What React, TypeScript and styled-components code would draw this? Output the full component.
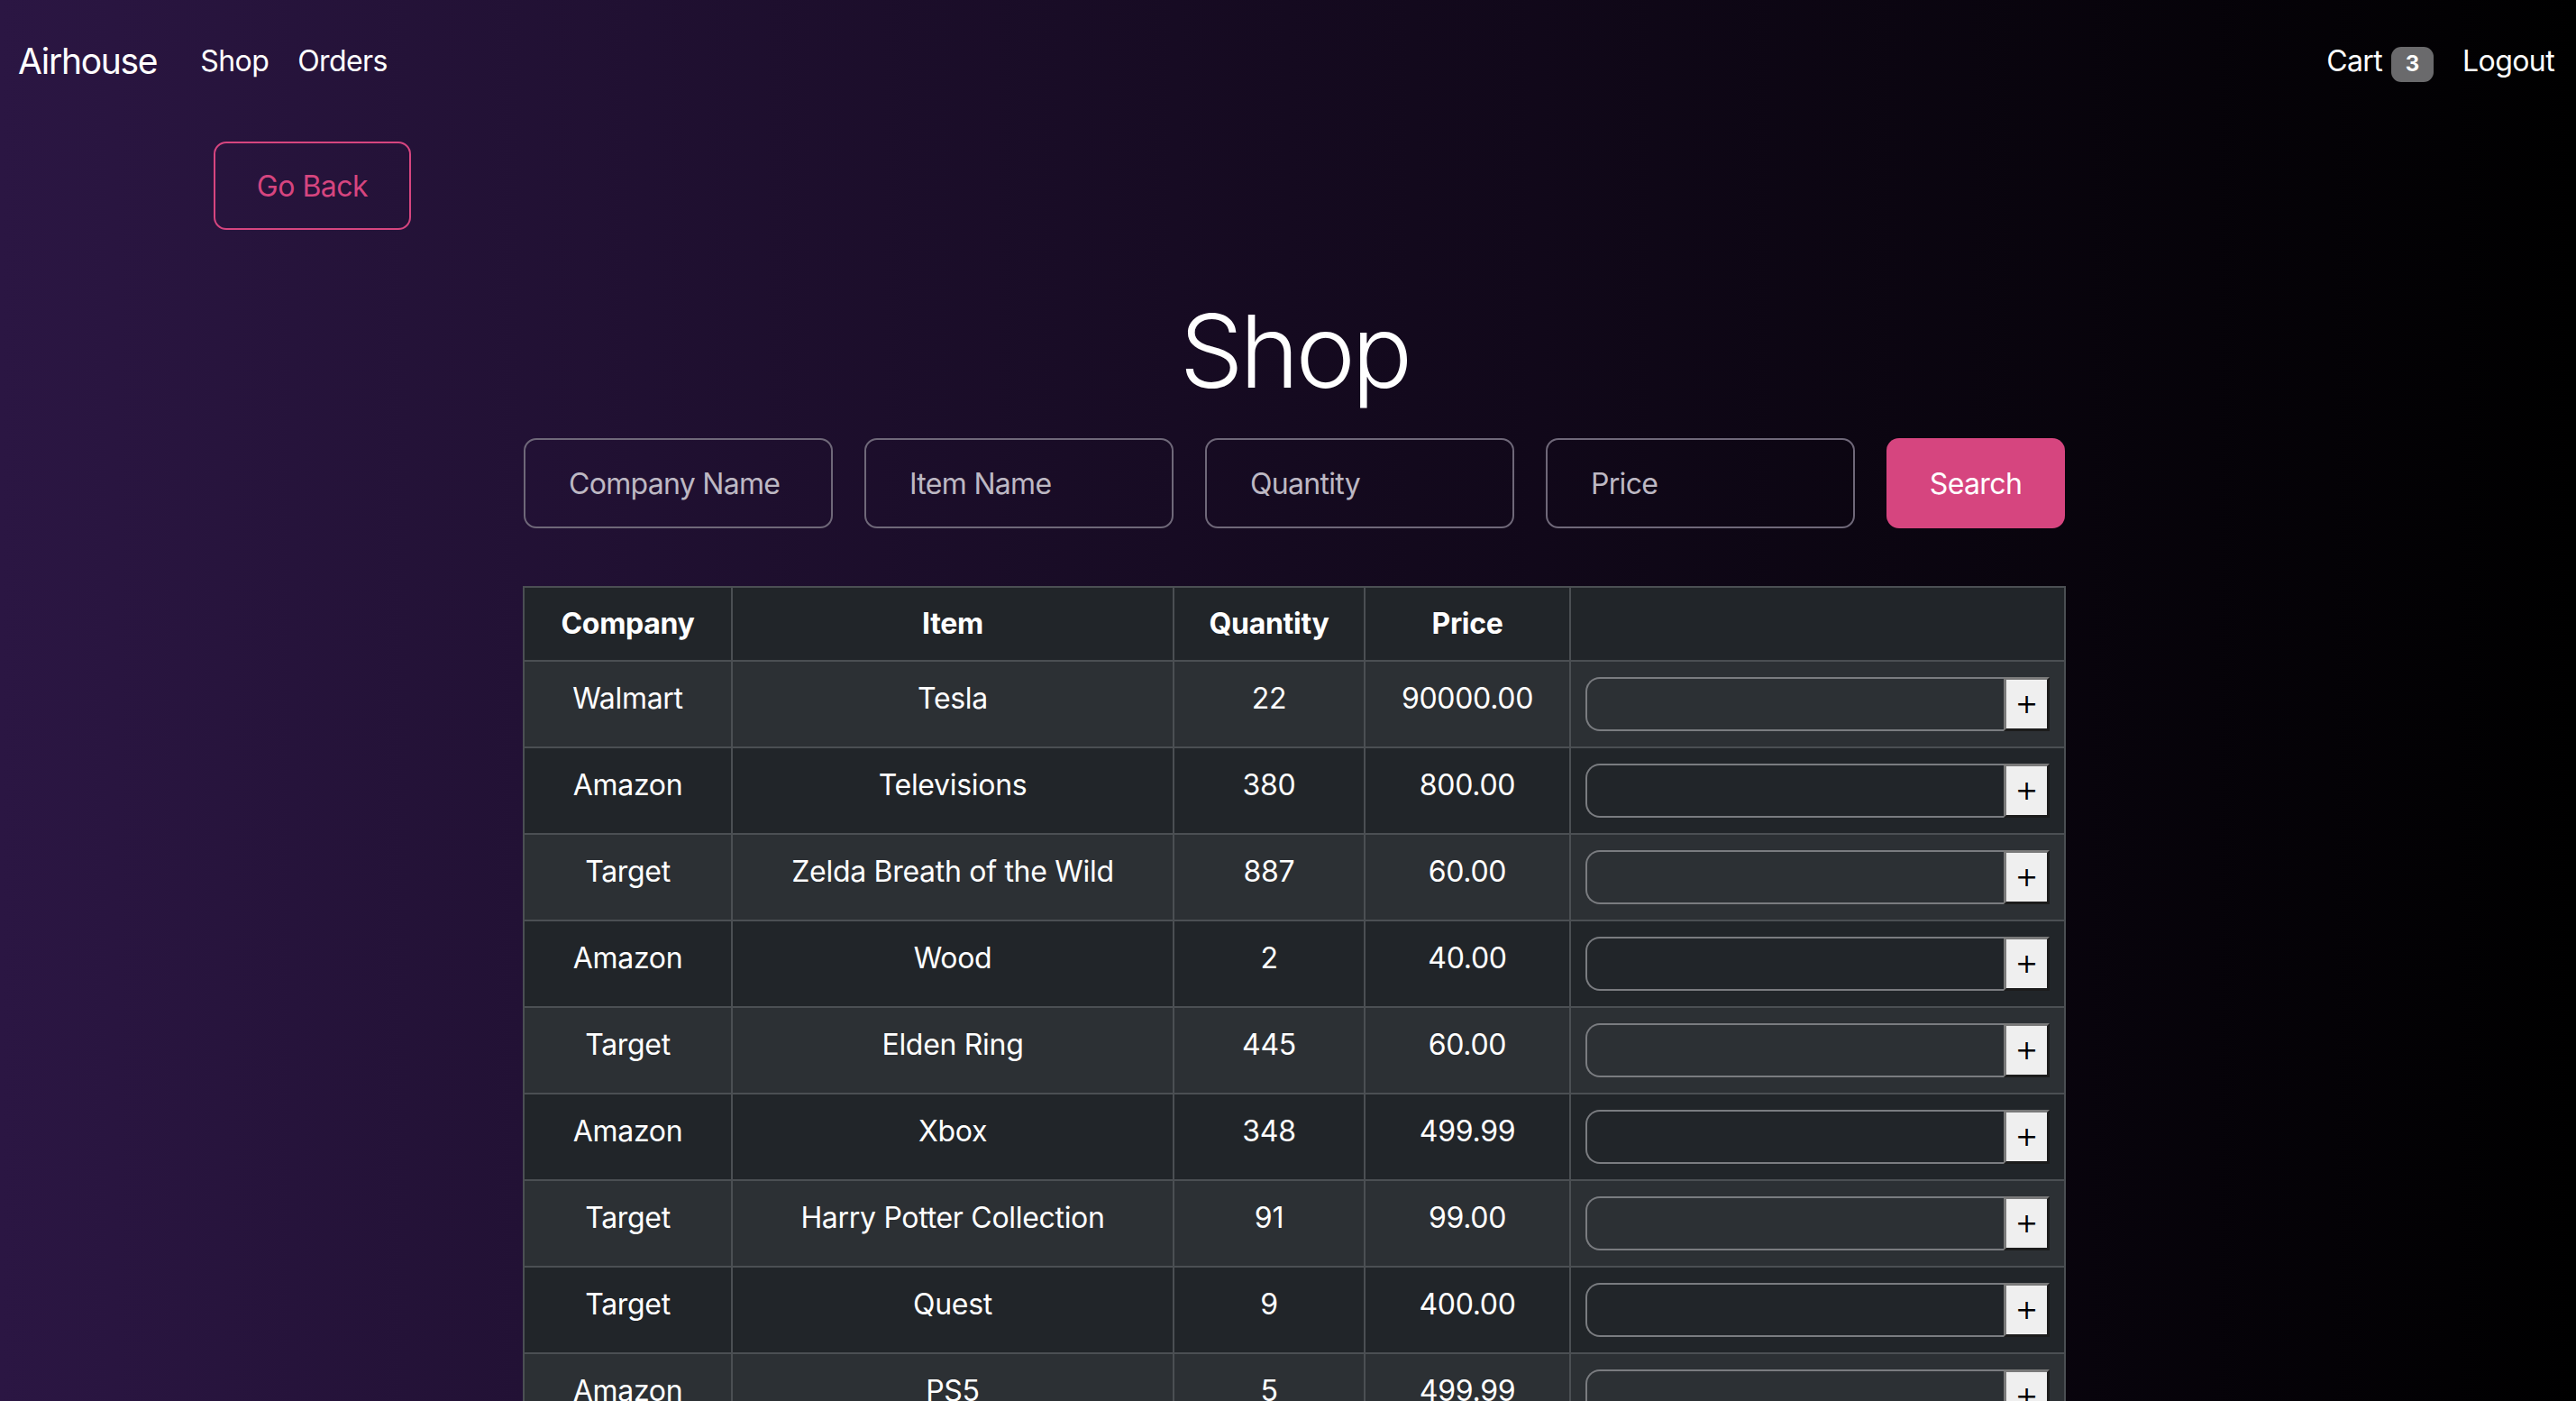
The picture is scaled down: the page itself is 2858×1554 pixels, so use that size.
import React from "react";
import styled, { createGlobalStyle } from "styled-components";

const GlobalStyle = createGlobalStyle`
  html, body {
    margin: 0;
    padding: 0;
    min-height: 100%;
  }
  body {
    min-height: 100vh;
    background: linear-gradient(to right, #2b1643 0%, #150a20 50%, #000000 100%);
    font-family: Inter, "Noto Sans", "Liberation Sans", sans-serif;
    color: #ffffff;
    -webkit-font-smoothing: antialiased;
  }
  * { box-sizing: border-box; }
`;

const Page = styled.div`
  display: flex;
  flex-direction: column;
  min-height: 100vh;
`;

const Navbar = styled.nav`
  display: flex;
  align-items: center;
  height: 136px;
  padding: 0 24px 0 20px;
`;

const Brand = styled.a`
  font-size: 39px;
  line-height: 60px;
  color: #ffffff;
  text-decoration: none;
  margin-right: 32px;
  letter-spacing: -1.3px;
`;

const NavGroup = styled.div<{ $right?: boolean }>`
  display: flex;
  align-items: center;
  margin-left: ${(p) => (p.$right ? "auto" : "0")};
`;

const NavLink = styled.a<{ $last?: boolean }>`
  display: flex;
  align-items: center;
  gap: 10px;
  font-size: 32px;
  line-height: 48px;
  color: #ffffff;
  text-decoration: none;
  padding: 0 ${(p) => (p.$last ? "0" : "16px")} 0 16px;
  letter-spacing: -0.6px;
`;

const Badge = styled.span`
  display: inline-flex;
  align-items: center;
  justify-content: center;
  width: 47px;
  height: 39px;
  margin-top: 6px;
  border-radius: 11px;
  background: #6a6a6c;
  color: #ffffff;
  font-size: 24px;
  font-weight: 700;
  letter-spacing: 0;
`;

const BackRow = styled.div`
  padding: 21px 0 0 237px;
`;

const OutlineButton = styled.button`
  width: 219px;
  height: 98px;
  border: 2px solid #d6457f;
  border-radius: 14px;
  background: transparent;
  color: #d6457f;
  font-family: inherit;
  font-size: 32px;
  letter-spacing: -0.5px;
  cursor: pointer;
`;

const Main = styled.main`
  display: flex;
  flex-direction: column;
  align-items: center;
  padding-left: 14px;
`;

const Title = styled.h1`
  margin: 67px 0 0;
  font-size: 112px;
  line-height: 134px;
  font-weight: 300;
  letter-spacing: -4px;
`;

const SearchForm = styled.form`
  display: grid;
  grid-template-columns: repeat(4, 343px) 198px;
  column-gap: 35px;
  margin-top: 30px;
  width: 1710px;
`;

const SearchInput = styled.input`
  height: 100px;
  border: 2px solid #6f6879;
  border-radius: 14px;
  background: transparent;
  padding: 0 24px 0 48px;
  font-family: inherit;
  font-size: 32px;
  color: #ffffff;
  letter-spacing: -0.7px;
  outline: none;
  &::placeholder {
    color: #bdb8c3;
  }
`;

const SearchButton = styled.button`
  height: 100px;
  border: none;
  border-radius: 14px;
  background: #d6457f;
  color: #ffffff;
  font-family: inherit;
  font-size: 32px;
  letter-spacing: -0.6px;
  cursor: pointer;
`;

const Table = styled.table`
  margin-top: 64px;
  width: 1710px;
  table-layout: fixed;
  border-collapse: collapse;
  border: 2px solid #4b4f53;
  font-size: 32px;
  line-height: 48px;
  letter-spacing: -0.3px;
`;

const Col = styled.col<{ $w: number }>`
  width: ${(p) => p.$w}px;
`;

const HeadCell = styled.th`
  background: #212529;
  border: 2px solid #4b4f53;
  padding: 16px;
  font-weight: 700;
  text-align: center;
  vertical-align: top;
`;

const Row = styled.tr<{ $striped: boolean }>`
  background: ${(p) => (p.$striped ? "#2c3034" : "#212529")};
`;

const Cell = styled.td`
  border: 2px solid #4b4f53;
  padding: 17px 16px 15px;
  text-align: center;
  vertical-align: top;
`;

const QtyGroup = styled.div`
  display: flex;
  align-items: flex-start;
  height: 62px;
`;

const QtyInput = styled.input`
  flex: 1;
  min-width: 0;
  height: 60px;
  background: transparent;
  border: 2px solid #7a7c80;
  border-right: none;
  border-radius: 16px 0 0 16px;
  color: #ffffff;
  font-family: inherit;
  font-size: 28px;
  outline: none;
`;

const AddButton = styled.button`
  width: 51px;
  height: 60px;
  padding: 0;
  border-style: solid;
  border-width: 3px;
  border-color: #7a7a7a #1c1c1c #1c1c1c #7a7a7a;
  background: #efefef;
  color: #000000;
  font-family: "DejaVu Sans", sans-serif;
  font-size: 30px;
  line-height: 1;
  cursor: pointer;
`;

const columns = [
  { label: "Company", w: 231 },
  { label: "Item", w: 490 },
  { label: "Quantity", w: 212 },
  { label: "Price", w: 228 },
  { label: "", w: 549 },
];

const rows = [
  ["Walmart", "Tesla", "22", "90000.00"],
  ["Amazon", "Televisions", "380", "800.00"],
  ["Target", "Zelda Breath of the Wild", "887", "60.00"],
  ["Amazon", "Wood", "2", "40.00"],
  ["Target", "Elden Ring", "445", "60.00"],
  ["Amazon", "Xbox", "348", "499.99"],
  ["Target", "Harry Potter Collection", "91", "99.00"],
  ["Target", "Quest", "9", "400.00"],
  ["Amazon", "PS5", "5", "499.99"],
];

export default function App() {
  return (
    <>
      <GlobalStyle />
      <Page>
        <Navbar>
          <Brand href="#">Airhouse</Brand>
          <NavGroup>
            <NavLink href="#">Shop</NavLink>
            <NavLink href="#">Orders</NavLink>
          </NavGroup>
          <NavGroup $right>
            <NavLink href="#">
              Cart <Badge>3</Badge>
            </NavLink>
            <NavLink href="#" $last>
              Logout
            </NavLink>
          </NavGroup>
        </Navbar>
        <BackRow>
          <OutlineButton type="button">Go Back</OutlineButton>
        </BackRow>
        <Main>
          <Title>Shop</Title>
          <SearchForm onSubmit={(e) => e.preventDefault()}>
            <SearchInput placeholder="Company Name" />
            <SearchInput placeholder="Item Name" />
            <SearchInput placeholder="Quantity" />
            <SearchInput placeholder="Price" />
            <SearchButton type="submit">Search</SearchButton>
          </SearchForm>
          <Table>
            <colgroup>
              {columns.map((c, i) => (
                <Col key={i} $w={c.w} />
              ))}
            </colgroup>
            <thead>
              <tr>
                {columns.map((c, i) => (
                  <HeadCell key={i}>{c.label}</HeadCell>
                ))}
              </tr>
            </thead>
            <tbody>
              {rows.map((r, i) => (
                <Row key={i} $striped={i % 2 === 0}>
                  {r.map((v, j) => (
                    <Cell key={j}>{v}</Cell>
                  ))}
                  <Cell>
                    <QtyGroup>
                      <QtyInput type="text" />
                      <AddButton type="button">+</AddButton>
                    </QtyGroup>
                  </Cell>
                </Row>
              ))}
            </tbody>
          </Table>
        </Main>
      </Page>
    </>
  );
}
